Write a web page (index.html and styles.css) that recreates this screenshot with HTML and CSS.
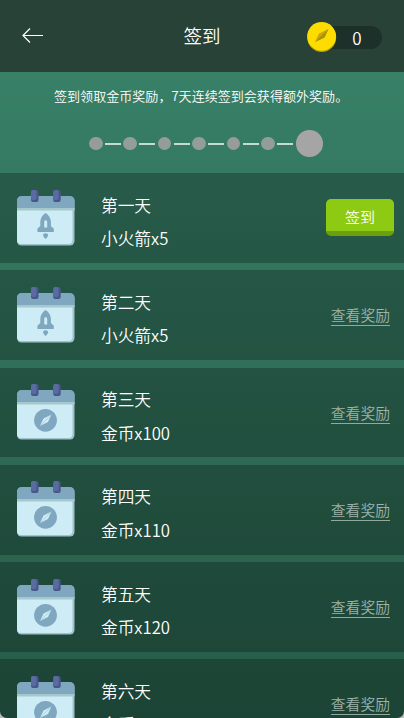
FILE: index.html
```
<!DOCTYPE html>
<html lang="zh-CN">
<head>
<meta charset="utf-8">
<title>签到</title>
<link rel="stylesheet" href="styles.css">
</head>
<body>
<svg class="defs" width="0" height="0" aria-hidden="true">
  <symbol id="calendar" viewBox="0 0 58 56">
    <rect x="0" y="6.5" width="57.500" height="49" rx="4.5" fill="#9fc3ca"/>
    <path d="M0 18H55.500V50Q55.500 54 51.500 54H4Q0 54 0 50Z" fill="#cdecf5"/>
    <path d="M0 19V11Q0 6 5 6H52.500Q57.500 6 57.500 11V19Z" fill="#7fa7c0"/>
    <rect x="0" y="18" width="57.500" height="2.500" fill="#a5c8cd"/>
    <rect x="14" y="0" width="7.500" height="12" rx="2" fill="#485789"/>
    <rect x="14" y="0" width="5.500" height="10" rx="2" fill="#596ba0"/>
    <rect x="36.200" y="0" width="7.500" height="12" rx="2" fill="#485789"/>
    <rect x="36.200" y="0" width="5.500" height="10" rx="2" fill="#596ba0"/>
  </symbol>
  <symbol id="rocket" viewBox="0 0 58 56">
    <path fill="#7fa7c0" fill-rule="evenodd" d="M28.600 23C32 25 33.900 28.500 33.900 32V36L36.800 38.800V42H20.400V38.800L23.300 36V32C23.300 28.500 25.200 25 28.600 23ZM27.200 37.500H30.200V32C30.200 29.800 27.200 29.800 27.200 32Z"/>
    <path fill="#7fa7c0" d="M26.400 44Q28.600 42.600 30.800 44Q32 46 28.600 49Q25.200 46 26.400 44Z"/>
  </symbol>
  <symbol id="compass" viewBox="0 0 58 56">
    <circle cx="28.500" cy="36.300" r="11.400" fill="#7fa7c0"/>
    <path d="M34.500 30.500L31 38L23 42L26.500 34.500Z" fill="#cdecf5"/>
    <path d="M34.500 30.500L23 42" stroke="#9fc3ca" stroke-width=".6"/>
  </symbol>
</svg>
<main class="screen">
  <header class="header">
    <svg class="back" viewBox="0 0 22 16"><path d="M21 7.500H1M8 .500L1 7.500L8 14.500"/></svg>
    <h1 class="title">签到</h1>
    <div class="wallet">
      <svg class="coin" viewBox="0 0 30 30">
        <circle cx="14.700" cy="15.500" r="14.500" fill="#b89e0c"/>
        <circle cx="14.600" cy="14.400" r="14.400" fill="#fddc00"/>
        <path d="M21.400 7L17.500 15.500L8 20L12 11.500Z" fill="#c8aa0a"/>
        <path d="M21.400 7L17.500 15.500L8 20Z" fill="#aa900c"/>
      </svg>
      <span class="balance">0</span>
    </div>
  </header>
  <section class="intro">
    <p class="hint">签到领取金币奖励，7天连续签到会获得额外奖励。</p>
    <div class="steps">
      <i class="dot"></i><i class="dash"></i><i class="dot"></i><i class="dash"></i><i class="dot"></i><i class="dash"></i><i class="dot"></i><i class="dash"></i><i class="dot"></i><i class="dash"></i><i class="dot"></i><i class="dash"></i><i class="dot final"></i>
    </div>
  </section>
  <section class="days">
    <article class="day"><svg class="icon"><use href="#calendar"/><use href="#rocket"/></svg><div class="text"><p>第一天</p><p>小火箭x5</p></div><button class="sign">签到</button></article>
    <article class="day"><svg class="icon"><use href="#calendar"/><use href="#rocket"/></svg><div class="text"><p>第二天</p><p>小火箭x5</p></div><a class="view">查看奖励</a></article>
    <article class="day"><svg class="icon"><use href="#calendar"/><use href="#compass"/></svg><div class="text"><p>第三天</p><p>金币x100</p></div><a class="view">查看奖励</a></article>
    <article class="day"><svg class="icon"><use href="#calendar"/><use href="#compass"/></svg><div class="text"><p>第四天</p><p>金币x110</p></div><a class="view">查看奖励</a></article>
    <article class="day"><svg class="icon"><use href="#calendar"/><use href="#compass"/></svg><div class="text"><p>第五天</p><p>金币x120</p></div><a class="view">查看奖励</a></article>
    <article class="day"><svg class="icon"><use href="#calendar"/><use href="#compass"/></svg><div class="text"><p>第六天</p><p>金币x130</p></div><a class="view">查看奖励</a></article>
  </section>
</main>
</body>
</html>
```
FILE: styles.css
```
* { box-sizing: border-box; }
html { background: #b9bdbb; }
body {
  margin: 0;
  font-family: "Noto Sans CJK SC", sans-serif;
  font-weight: 350;
  color: #fff;
}
p, h1 { margin: 0; font-weight: inherit; }
.defs { display: block; }
.screen {
  height: 718px;
  overflow: hidden;
  display: flex;
  flex-direction: column;
  border-radius: 0 0 7px 7px;
  background: linear-gradient(#388067 72px, #367c64 130px, #265b48 718px);
}
.header {
  flex: none;
  height: 72px;
  padding: 0 22px;
  display: grid;
  grid-template-columns: 1fr auto 1fr;
  align-items: center;
  background: #284238;
}
.back {
  width: 22px;
  height: 16px;
  fill: none;
  stroke: #fff;
  stroke-width: 1.2;
}
.title { padding-bottom: 2px; font-size: 18.5px; line-height: 28px; }
.wallet {
  justify-self: end;
  width: 75px;
  height: 23px;
  margin-top: 3px;
  display: flex;
  align-items: center;
  border-radius: 12px;
  background: #1d3029;
}
.coin { flex: none; width: 30px; height: 30px; margin-top: -1px; }
.balance { flex: 1; padding-right: 5px; text-align: center; font-size: 17px; line-height: 23px; }
.intro { flex: none; height: 101px; padding-top: 14px; }
.hint {
  padding-left: 54px;
  font-size: 13.05px;
  line-height: 20px;
  white-space: nowrap;
}
.steps {
  height: 27px;
  margin: 24px 81px 0 89px;
  display: flex;
  align-items: center;
  justify-content: space-between;
}
.dot { flex: none; width: 13.500px; height: 13.500px; border-radius: 50%; background: #959d99; }
.dot.final { width: 26.500px; height: 26.500px; margin-left: 1px; background: #a5a5a5; }
.dash { width: 16px; height: 2px; background: #c3dbd2; }
.days { display: flex; flex-direction: column; gap: 7.600px; }
.day {
  flex: none;
  height: 89.700px;
  display: flex;
  align-items: flex-start;
  background: rgba(0, 0, 0, .25);
}
.icon { flex: none; width: 58px; height: 56px; margin: 16.500px 26px 0 17px; }
.text { flex: 1; padding-top: 15.500px; font-size: 16.700px; line-height: 33.500px; }
.sign {
  width: 68px;
  height: 37px;
  margin: 26px 10px 0 0;
  padding: 4px 0 0;
  border: 0;
  border-bottom: 5px solid #6d9e0e;
  border-radius: 5px;
  background: #8dca14;
  color: #fff;
  font: 350 15px/28px "Noto Sans CJK SC", sans-serif;
}
.view {
  margin: 34px 14px 0 0;
  border-bottom: 1.500px solid #91aaa1;
  color: #9db3ab;
  font-size: 14.800px;
  line-height: 21px;
}
```
